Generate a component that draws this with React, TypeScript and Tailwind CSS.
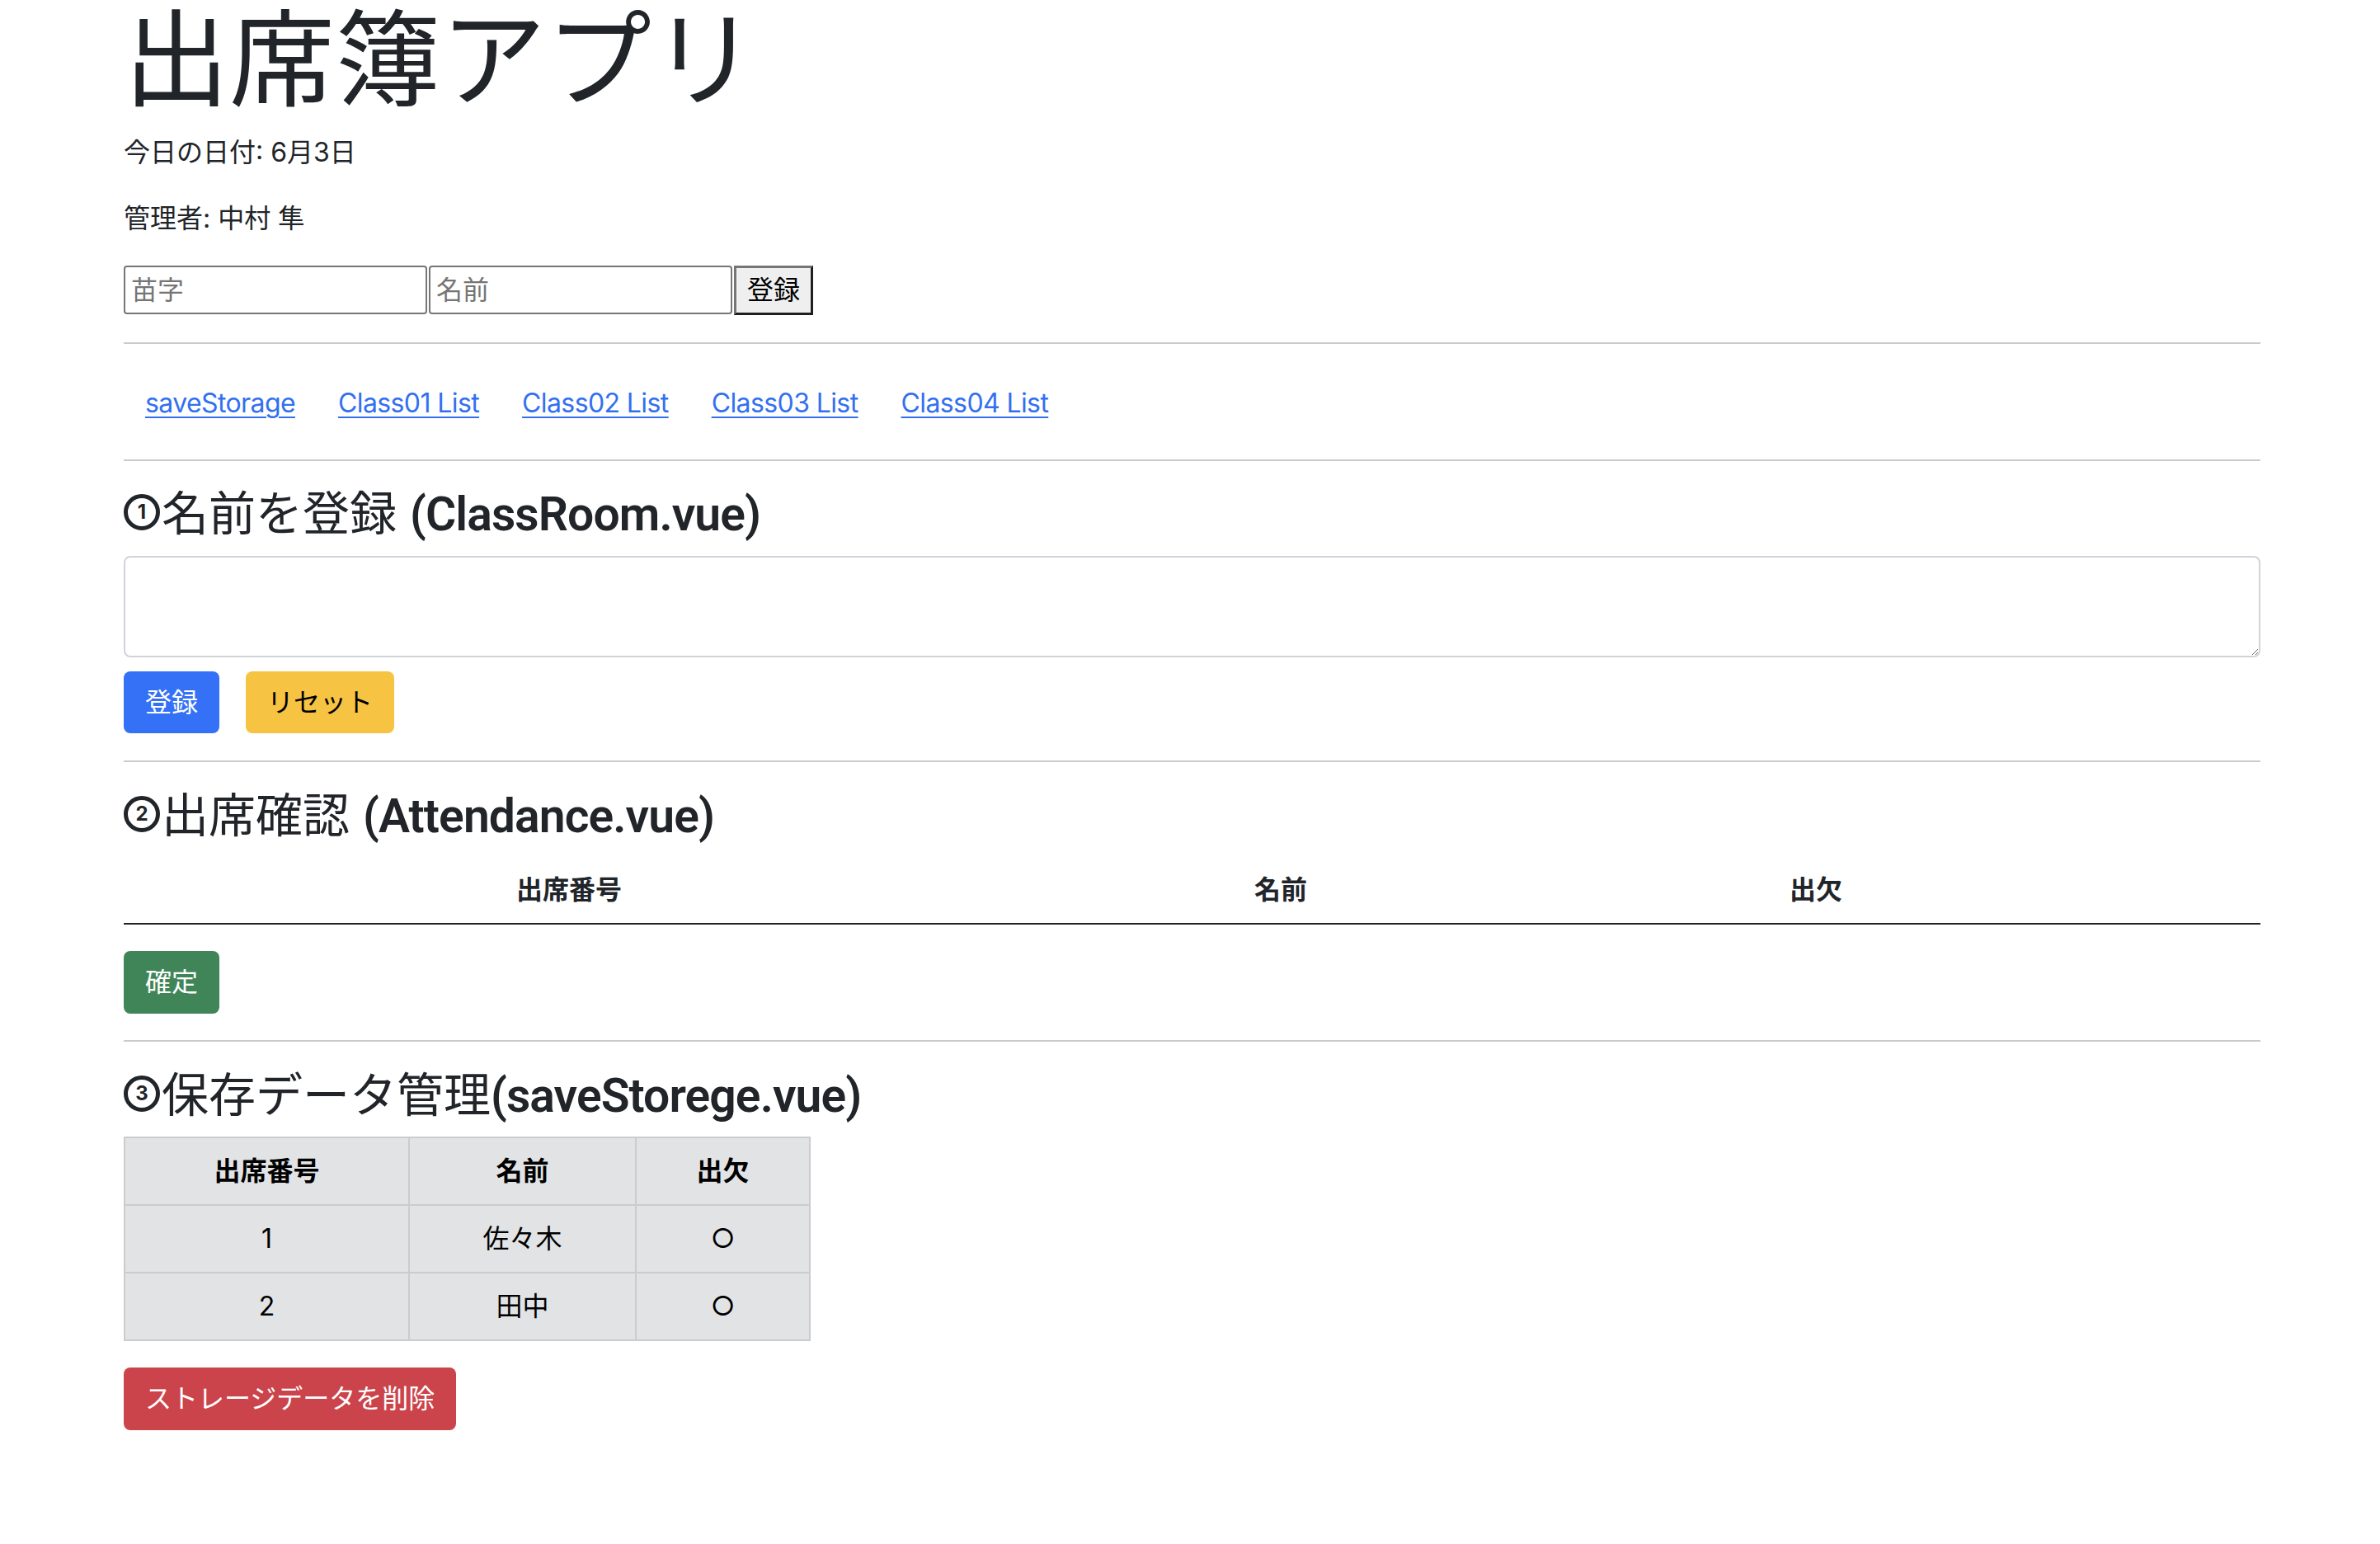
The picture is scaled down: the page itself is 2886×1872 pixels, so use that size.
import React from "react";

const Hr = ({ className = "" }: { className?: string }) => (
  <div className={"h-[2px] w-full bg-[#cbcbcb] " + className} />
);

const Circ = ({ n }: { n: string }) => (
  <span className="inline-flex relative top-[-6px] align-middle w-[44px] h-[44px] mr-[2px] rounded-full border-[5px] border-[#212529] items-center justify-center text-[24px] font-bold leading-none font-[Inter,sans-serif]">
    {n}
  </span>
);

const Lat = ({ children }: { children: React.ReactNode }) => (
  <span className="font-semibold font-[Roboto,sans-serif] tracking-[-0.9px]">{children}</span>
);

export default function App() {
  const links = ["saveStorage", "Class01 List", "Class02 List", "Class03 List", "Class04 List"];
  const rows = [
    { no: "1", name: "佐々木", st: "○" },
    { no: "2", name: "田中", st: "○" },
  ];
  return (
    <div className="min-h-screen bg-white text-[#212529] font-[Inter,'Noto_Sans_CJK_JP',sans-serif]">
      <div className="pl-[150px] w-[2741px]">
        <h1 className="pt-[12px] text-[128px] leading-[122px] font-normal mb-[27px] whitespace-nowrap">出席簿アプリ</h1>
        <p className="text-[32px] leading-[48px] mb-[32px]">今日の日付: 6月3日</p>
        <p className="text-[32px] leading-[48px] mb-[33px]">管理者: 中村 隼</p>

        <div className="flex items-start gap-[2px]">
          <input
            placeholder="苗字"
            className="w-[368px] h-[59px] border-2 border-[#767676] rounded-[4px] px-[7px] text-[32px] leading-[48px] placeholder:text-[#757575] outline-none bg-white"
          />
          <input
            placeholder="名前"
            className="w-[368px] h-[59px] border-2 border-[#767676] rounded-[4px] px-[7px] text-[32px] leading-[48px] placeholder:text-[#757575] outline-none bg-white"
          />
          <button className="w-[96px] h-[60px] bg-[#efefef] border-[3px] border-t-[#767676] border-l-[#767676] border-r-[#1f1f1f] border-b-[#1f1f1f] text-[32px] leading-[48px] text-black flex items-center justify-center">
            登録
          </button>
        </div>

        <Hr className="mt-[33px]" />

        <nav className="h-[140px] pt-[48px] flex">
          {links.map((l) => (
            <a
              key={l}
              href="#"
              className="px-[26px] text-[32px] leading-[48px] tracking-[-0.6px] text-[#3370f0] underline decoration-[2px] underline-offset-[5px]"
            >
              {l}
            </a>
          ))}
        </nav>

        <Hr />

        <h3 className="mt-[29px] h-[70px] overflow-visible text-[57px] leading-[70px] font-normal whitespace-nowrap">
          <Circ n="1" />名前を登録 <Lat>(ClassRoom.vue)</Lat>
        </h3>
        <textarea className="mt-[16px] block w-full h-[123px] border-2 border-[#d0d4d9] rounded-[8px] bg-white outline-none text-[32px] px-[24px] py-[12px]" />
        <div className="mt-[17px] flex gap-[32px]">
          <button className="h-[75px] px-[26px] rounded-[8px] bg-[#3471f6] text-white text-[32px] leading-[48px] flex items-center">
            登録
          </button>
          <button className="h-[75px] px-[26px] rounded-[8px] bg-[#f6c343] text-black text-[32px] leading-[48px] flex items-center">
            リセット
          </button>
        </div>

        <Hr className="mt-[33px]" />

        <h3 className="mt-[30px] h-[70px] overflow-visible text-[57px] leading-[70px] font-normal whitespace-nowrap">
          <Circ n="2" />出席確認 <Lat>(Attendance.vue)</Lat>
        </h3>
        <div className="mt-[15px] grid grid-cols-[1080px_646px_652px_1fr] h-[82px] border-b-2 border-[#212529] text-[32px] font-bold items-center">
          <div className="text-center">出席番号</div>
          <div className="text-center">名前</div>
          <div className="text-center">出欠</div>
          <div />
        </div>
        <div className="mt-[32px] flex">
          <button className="h-[76px] px-[26px] rounded-[8px] bg-[#408558] text-white text-[32px] leading-[48px] flex items-center">
            確定
          </button>
        </div>

        <Hr className="mt-[32px]" />

        <h3 className="mt-[30px] h-[70px] overflow-visible text-[57px] leading-[70px] font-normal whitespace-nowrap">
          <Circ n="3" />保存データ管理<Lat>(saveStorege.vue)</Lat>
        </h3>
        <table className="mt-[15px] border-collapse table-fixed w-[831px] bg-[#e2e3e5] text-[32px] text-black">
          <colgroup>
            <col className="w-[345px]" />
            <col className="w-[275px]" />
            <col className="w-[211px]" />
          </colgroup>
          <thead>
            <tr className="h-[82px]">
              <th className="border-2 border-[#cbcccd] font-bold text-center">出席番号</th>
              <th className="border-2 border-[#cbcccd] font-bold text-center">名前</th>
              <th className="border-2 border-[#cbcccd] font-bold text-center">出欠</th>
            </tr>
          </thead>
          <tbody>
            {rows.map((r) => (
              <tr key={r.no} className="h-[82px]">
                <td className="border-2 border-[#cbcccd] text-center">{r.no}</td>
                <td className="border-2 border-[#cbcccd] text-center">{r.name}</td>
                <td className="border-2 border-[#cbcccd] text-center">{r.st}</td>
              </tr>
            ))}
          </tbody>
        </table>
        <div className="mt-[32px] flex pb-[100px]">
          <button className="h-[76px] px-[26px] rounded-[8px] bg-[#cb444b] text-white text-[32px] leading-[48px] flex items-center">
            ストレージデータを削除
          </button>
        </div>
      </div>
    </div>
  );
}
